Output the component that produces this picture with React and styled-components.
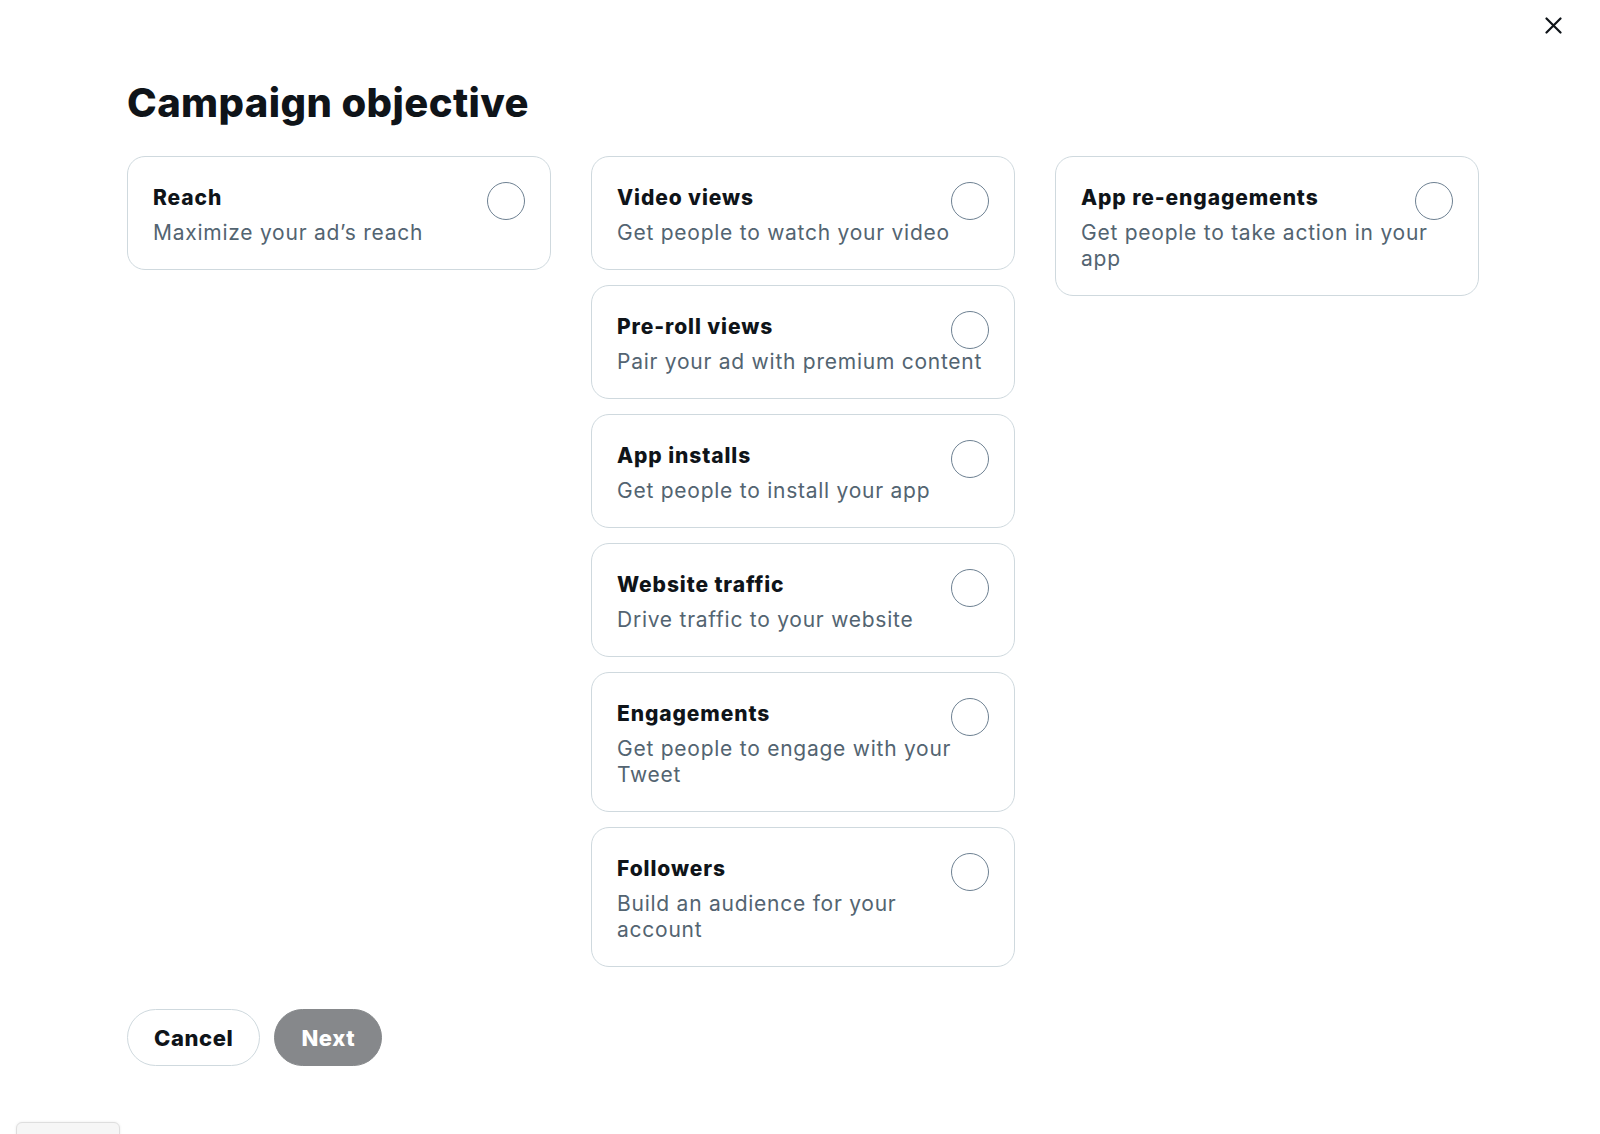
import React from 'react';
import styled, { createGlobalStyle } from 'styled-components';

const GlobalStyle = createGlobalStyle`
  html, body {
    margin: 0;
    padding: 0;
    background: #ffffff;
    font-family: Inter, "Liberation Sans", sans-serif;
    color: #0f1419;
  }
`

const Page = styled.div`
  min-height: 1134px;
  box-sizing: border-box;
`

const TopBar = styled.div`
  display: flex;
  justify-content: flex-end;
  padding: 7px 29px 0 0;
  height: 43px;
`

const CloseButton = styled.button`
  width: 36px;
  height: 36px;
  border: none;
  background: transparent;
  border-radius: 50%;
  display: flex;
  align-items: center;
  justify-content: center;
  padding: 0;
  cursor: pointer;
  color: #0f1419;
`

const Content = styled.div`
  padding: 29px 0 0 127px;
`

const Title = styled.h1`
  margin: 0 0 29px;
  font-size: 40px;
  line-height: 48px;
  font-weight: 800;
  letter-spacing: 0.4px;
`

const Grid = styled.div`
  display: grid;
  grid-template-columns: repeat(3, 424px);
  column-gap: 40px;
  align-items: start;
`

const Column = styled.div`
  display: flex;
  flex-direction: column;
  gap: 15px;
`

const Card = styled.label`
  display: block;
  border: 1px solid #cfd9de;
  border-radius: 18px;
  padding: 25px 26px 23px 25px;
  cursor: pointer;
`

const CardHead = styled.div`
  display: flex;
  justify-content: space-between;
  align-items: flex-start;
  height: 38px;
`

const CardTitle = styled.div`
  margin-top: 3px;
  font-size: 21px;
  line-height: 25px;
  font-weight: 800;
  letter-spacing: 0.9px;
  color: #0f1419;
`

const Radio = styled.span`
  width: 38px;
  height: 38px;
  box-sizing: border-box;
  border: 1.5px solid #6e8192;
  border-radius: 50%;
  flex-shrink: 0;
  margin-right: -1px;
`

const CardText = styled.div`
  font-size: 21px;
  line-height: 26px;
  letter-spacing: 0.75px;
  color: #536471;
`

const Actions = styled.div`
  display: flex;
  gap: 14px;
  margin-top: 42px;
`

const Button = styled.button`
  height: 57px;
  padding: 0 26px;
  border-radius: 9999px;
  font-family: Inter, "Liberation Sans", sans-serif;
  font-size: 22px;
  font-weight: 800;
  letter-spacing: 0.6px;
  cursor: pointer;
  border: 1px solid ${p => p.$primary ? '#0f1419' : '#cfd9de'};
  background: ${p => p.$primary ? '#0f1419' : '#ffffff'};
  color: ${p => p.$primary ? '#ffffff' : '#0f1419'};
  opacity: ${p => p.$disabled ? 0.5 : 1};
`

const FeedbackTab = styled.div`
  position: fixed;
  left: 16px;
  bottom: -10px;
  width: 102px;
  height: 20px;
  background: #f6f6f6;
  border: 1px solid #dedede;
  border-radius: 6px;
  box-shadow: 0 0 3px rgba(0, 0, 0, 0.08);
`

const columns = [
  [
    { title: 'Reach', text: 'Maximize your ad’s reach' },
  ],
  [
    { title: 'Video views', text: 'Get people to watch your video' },
    { title: 'Pre-roll views', text: 'Pair your ad with premium content' },
    { title: 'App installs', text: 'Get people to install your app' },
    { title: 'Website traffic', text: 'Drive traffic to your website' },
    { title: 'Engagements', text: 'Get people to engage with your Tweet' },
    { title: 'Followers', text: 'Build an audience for your account' },
  ],
  [
    { title: 'App re-engagements', text: 'Get people to take action in your app' },
  ],
]

const Objective = ({ title, text }) => (
  <Card>
    <CardHead>
      <CardTitle>{title}</CardTitle>
      <Radio />
    </CardHead>
    <CardText>{text}</CardText>
  </Card>
)

export default function App() {
  return (
    <Page>
      <GlobalStyle />
      <TopBar>
        <CloseButton aria-label="Close">
          <svg width="17" height="17" viewBox="0 0 17 17">
            <path d="M1.5 1.5 L15.5 15.5 M15.5 1.5 L1.5 15.5" stroke="currentColor" strokeWidth="2.2" strokeLinecap="round" />
          </svg>
        </CloseButton>
      </TopBar>
      <Content>
        <Title>Campaign objective</Title>
        <Grid>
          {columns.map((col, i) => (
            <Column key={i}>
              {col.map(item => <Objective key={item.title} {...item} />)}
            </Column>
          ))}
        </Grid>
        <Actions>
          <Button>Cancel</Button>
          <Button $primary $disabled>Next</Button>
        </Actions>
      </Content>
      <FeedbackTab />
    </Page>
  )
}
